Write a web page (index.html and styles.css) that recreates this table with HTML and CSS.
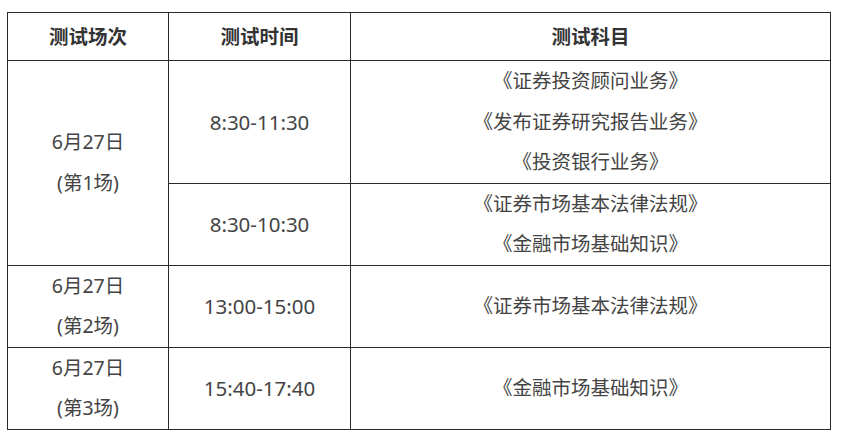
FILE: index.html
```html
<!DOCTYPE html>
<html lang="zh-CN">
<head>
<meta charset="utf-8">
<link rel="stylesheet" href="styles.css">
</head>
<body>
<table class="schedule">
  <colgroup>
    <col class="c1">
    <col class="c2">
    <col class="c3">
  </colgroup>
  <thead>
    <tr class="head">
      <th>测试场次</th>
      <th>测试时间</th>
      <th>测试科目</th>
    </tr>
  </thead>
  <tbody>
    <tr class="r3">
      <td rowspan="2"><div>6月27日</div><div>(第1场)</div></td>
      <td class="time">8:30-11:30</td>
      <td><div>《证券投资顾问业务》</div><div>《发布证券研究报告业务》</div><div>《投资银行业务》</div></td>
    </tr>
    <tr class="r2">
      <td class="time">8:30-10:30</td>
      <td><div>《证券市场基本法律法规》</div><div>《金融市场基础知识》</div></td>
    </tr>
    <tr class="r2">
      <td><div>6月27日</div><div>(第2场)</div></td>
      <td class="time">13:00-15:00</td>
      <td>《证券市场基本法律法规》</td>
    </tr>
    <tr class="r2">
      <td><div>6月27日</div><div>(第3场)</div></td>
      <td class="time">15:40-17:40</td>
      <td>《金融市场基础知识》</td>
    </tr>
  </tbody>
</table>
</body>
</html>
```

FILE: styles.css
```css
html, body {
  margin: 0;
  padding: 0;
  background: #ffffff;
}
body {
  font-family: "Noto Sans", "Noto Sans CJK SC", sans-serif;
  color: #444444;
  font-size: 19.5px;
}
.schedule {
  border-collapse: collapse;
  margin: 12px 0 0 7px;
  width: 823px;
  table-layout: fixed;
}
.c1 { width: 161px; }
.c2 { width: 182px; }
.c3 { width: 480px; }
.schedule th,
.schedule td {
  border: 1px solid #2a2a2a;
  padding: 0;
  text-align: center;
  vertical-align: middle;
  line-height: 40.5px;
}
.schedule .time {
  font-size: 20.5px;
}
.schedule th {
  font-weight: bold;
  color: #333333;
  height: 47px;
  line-height: 47px;
}
.r3 { height: 122px; }
.r2 { height: 81px; }
```
